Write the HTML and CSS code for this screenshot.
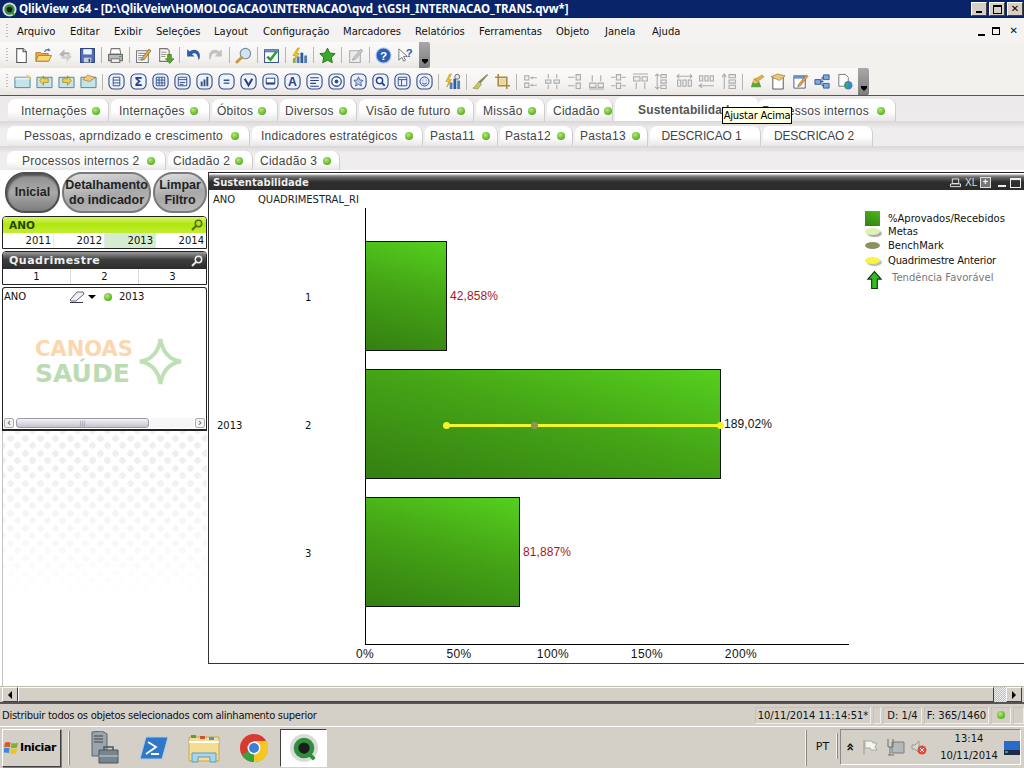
FILE: index.html
```html
<!DOCTYPE html>
<html lang="pt">
<head>
<meta charset="utf-8">
<title>QlikView x64</title>
<link rel="stylesheet" href="styles.css">
</head>
<body>
<svg class="defs" width="0" height="0" aria-hidden="true">
<defs>
<symbol id="i-new" viewBox="0 0 16 16"><path d="M3.5 1.5h6l3 3v10h-9z" fill="#fff" stroke="#555"/><path d="M9.5 1.5v3h3" fill="#ddd" stroke="#555"/></symbol>
<symbol id="i-open" viewBox="0 0 18 16"><path d="M1 5h5l1 1h7v8H1z" fill="#e8b04a" stroke="#a87820"/><path d="M3.500 8h14l-3 6H1z" fill="#f8d878" stroke="#b08428"/><path d="M10 4c1-2 3-2.500 5-2l-1-1.200M15 1.800l-1.400 1.600" fill="none" stroke="#5070a8" stroke-width="1.200"/></symbol>
<symbol id="i-ref" viewBox="0 0 16 16"><path d="M2 7l5-5v3h4l2 2H7v3z" fill="#b4b4b4"/><path d="M14 9l-5 5v-3H5L3 9h6V6z" fill="#cfcfcf"/></symbol>
<symbol id="i-save" viewBox="0 0 16 16"><path d="M1.500 1.500h13v13h-13z" fill="#4e6fb5" stroke="#2c4580"/><path d="M4 2h8v5H4z" fill="#f2f2f2"/><path d="M4.500 10h7v4.500h-7z" fill="#c8d0e0"/><path d="M9 11h1.500v3H9z" fill="#2c4580"/></symbol>
<symbol id="i-print" viewBox="0 0 16 16"><path d="M4 1.500h8l1 5H3z" fill="#fff" stroke="#777"/><path d="M1.500 7h13v6h-13z" fill="#b8bcc0" stroke="#666"/><path d="M4 11h8v3.500H4z" fill="#eee" stroke="#777"/><path d="M11.500 8.500h2v1h-2z" fill="#30a030"/></symbol>
<symbol id="i-note" viewBox="0 0 16 16"><path d="M1.500 3.500h11v11h-11z" fill="#fff" stroke="#777"/><path d="M3 6h7M3 8h6M3 10h5M3 12h6" stroke="#8898b0"/><path d="M7 10l6-8 2 1.500-6 8-3 1z" fill="#e8b040" stroke="#705020" stroke-width=".6"/></symbol>
<symbol id="i-docg" viewBox="0 0 16 16"><path d="M2.500 1.500h7l2 2v10h-9z" fill="#f4f4ea" stroke="#777"/><path d="M4 5h5M4 7h5M4 9h4" stroke="#9a9a8a"/><path d="M10 7h3.500v4H16l-4 4.500L8 11h2z" fill="#58a830" stroke="#2f7015" stroke-width=".6"/></symbol>
<symbol id="i-undo" viewBox="0 0 16 16"><path d="M2 2v7h7L6.500 6.500c2.500-1.500 5-.5 5.500 3l1 3c2.500-5 .5-10-4.500-10-1.500 0-3 .7-4 1.700z" fill="#2f5ca8"/></symbol>
<symbol id="i-redo" viewBox="0 0 16 16"><path d="M14 2v7H7l2.500-2.500c-2.500-1.500-5-.5-5.500 3l-1 3C.5 7.500 2.500 2.500 7.500 2.500c1.500 0 3 .7 4 1.700z" fill="#c2c2c2"/></symbol>
<symbol id="i-find" viewBox="0 0 18 18"><circle cx="11" cy="7" r="5.500" fill="#cfe4f4" stroke="#7a8c9c" stroke-width="1.200"/><path d="M7 11l-5 5" stroke="#c89a30" stroke-width="3" stroke-linecap="round"/></symbol>
<symbol id="i-check" viewBox="0 0 16 16"><path d="M1.500 2.500h13v12h-13z" fill="#fff" stroke="#33558c"/><path d="M2 3h12v2H2z" fill="#5a82c0"/><path d="M4 9l3 3 6-8" fill="none" stroke="#2fa030" stroke-width="2.400"/></symbol>
<symbol id="i-chart" viewBox="0 0 18 18"><path d="M6 10h3v7H6z" fill="#4f7fb5"/><path d="M10 6h3v11h-3z" fill="#2f5d9a"/><path d="M14 9h3v8h-3z" fill="#4f7fb5"/><path d="M2 17V12h3v5z" fill="#8ab040"/><path d="M7 1L2 9h3l-2 5 6-7H6l3-6z" fill="#f2c820" stroke="#a08010" stroke-width=".5"/></symbol>
<symbol id="i-star" viewBox="0 0 16 16"><path d="M8 1l2.200 4.600 5 .7-3.600 3.500.9 5L8 12.400l-4.500 2.400.9-5L.8 6.300l5-.7z" fill="#3aa828" stroke="#1f6a14" stroke-width=".8"/></symbol>
<symbol id="i-editg" viewBox="0 0 16 16"><path d="M2.500 3.500h10v11h-10z" fill="#ececec" stroke="#aaa"/><path d="M6 10l7-8 2 1.500-7 8-3 1z" fill="#c8c8c8" stroke="#999" stroke-width=".6"/></symbol>
<symbol id="i-help" viewBox="0 0 16 16"><circle cx="8" cy="8" r="7" fill="#2a5fb8" stroke="#a8c0e8"/><text x="8" y="12" font-size="11" font-weight="700" font-family="Liberation Sans" text-anchor="middle" fill="#fff">?</text></symbol>
<symbol id="i-what" viewBox="0 0 18 16"><path d="M2 1v12l3-3 2 4 2-1-2-4h4z" fill="#fff" stroke="#555" stroke-width=".8"/><text x="13" y="10" font-size="12" font-weight="700" font-family="Liberation Sans" text-anchor="middle" fill="#2a5fb8">?</text></symbol>
<symbol id="i-sheet" viewBox="0 0 18 16"><path d="M1 3.500h16v11H1z" fill="#c4e4ec" stroke="#558090"/><path d="M1.500 4h15v2h-15z" fill="#e4f4f8"/><path d="M14 0l.7 1.800L16.500 1l-.7 1.800L17.500 4l-2 .1-.5 1.800-.6-1.800-2 0 1.500-1.200-.8-1.900z" fill="#f6d020"/></symbol>
<symbol id="i-sl" viewBox="0 0 18 16"><path d="M1 3.500h16v11H1z" fill="#c4e4ec" stroke="#558090"/><path d="M4 7l4-5v3h5v4H8v3z" fill="#f2d040" stroke="#8a7010" stroke-width=".6"/></symbol>
<symbol id="i-sr" viewBox="0 0 18 16"><path d="M1 3.500h16v11H1z" fill="#c4e4ec" stroke="#558090"/><path d="M14 7l-4-5v3H5v4h5v3z" fill="#f2d040" stroke="#8a7010" stroke-width=".6"/></symbol>
<symbol id="i-sp" viewBox="0 0 18 16"><path d="M1 3.500h16v11H1z" fill="#c4e4ec" stroke="#558090"/><path d="M3 6l5-5 8 3-6 4z" fill="#f0c878" stroke="#8a6a20" stroke-width=".6"/></symbol>
<symbol id="i-bx" viewBox="0 0 18 18"><rect x="1" y="1" width="16" height="16" rx="5" fill="#eef2fa" stroke="#33508c" stroke-width="1.200"/></symbol>
<symbol id="i-f1" viewBox="0 0 18 18"><use href="#i-bx"/><path d="M5.500 4.500h7v9h-7zM5.500 7.500h7M5.500 10.500h7" fill="none" stroke="#33508c"/></symbol>
<symbol id="i-f2" viewBox="0 0 18 18"><use href="#i-bx"/><text x="9" y="14" font-size="13" font-weight="700" font-family="DejaVu Sans" text-anchor="middle" fill="#28408c">Σ</text></symbol>
<symbol id="i-f3" viewBox="0 0 18 18"><use href="#i-bx"/><path d="M4.500 4.500h9v9h-9zM4.500 7.500h9M4.500 10.500h9M7.500 4.500v9M10.500 4.500v9" fill="none" stroke="#33508c"/></symbol>
<symbol id="i-f4" viewBox="0 0 18 18"><use href="#i-bx"/><path d="M4.500 4.500h9v9h-9zM4.500 7h9M6 10h6M6 12h4" fill="none" stroke="#33508c"/></symbol>
<symbol id="i-f5" viewBox="0 0 18 18"><use href="#i-bx"/><path d="M5 9h2v5H5zM8 7h2v7H8zM11 4h2v10h-2z" fill="#33508c"/></symbol>
<symbol id="i-f6" viewBox="0 0 18 18"><use href="#i-bx"/><path d="M6 7h6v1.500H6zM6 10h6v1.500H6z" fill="#33508c"/></symbol>
<symbol id="i-f7" viewBox="0 0 18 18"><use href="#i-bx"/><path d="M5 6l4 7 4-7" fill="none" stroke="#28408c" stroke-width="2.200"/></symbol>
<symbol id="i-f8" viewBox="0 0 18 18"><use href="#i-bx"/><path d="M4.500 5.500h9v6h-9z" fill="#fff" stroke="#28408c"/><path d="M4.500 10h9v2h-9z" fill="#28408c"/></symbol>
<symbol id="i-f9" viewBox="0 0 18 18"><use href="#i-bx"/><text x="9" y="14" font-size="13" font-weight="700" font-family="Liberation Sans" text-anchor="middle" fill="#28408c">A</text></symbol>
<symbol id="i-f10" viewBox="0 0 18 18"><use href="#i-bx"/><path d="M4.500 5h9M4.500 8h9M4.500 11h6M4.500 14h9" stroke="#28408c" stroke-width="1.200"/></symbol>
<symbol id="i-f11" viewBox="0 0 18 18"><use href="#i-bx"/><circle cx="9" cy="9" r="5" fill="#fff" stroke="#33508c" stroke-width="1.400"/><circle cx="9" cy="9" r="2" fill="#33508c"/></symbol>
<symbol id="i-f12" viewBox="0 0 18 18"><use href="#i-bx"/><path d="M9 4l1.500 3.400 3.500.4-2.600 2.400.7 3.600L9 12l-3.100 1.800.7-3.600L4 7.800l3.500-.4z" fill="#b8c8ec" stroke="#33508c" stroke-width=".8"/></symbol>
<symbol id="i-f13" viewBox="0 0 18 18"><use href="#i-bx"/><circle cx="8" cy="8" r="3.300" fill="#fff" stroke="#28408c" stroke-width="1.500"/><path d="M10.500 10.500l3 3" stroke="#28408c" stroke-width="2"/></symbol>
<symbol id="i-f14" viewBox="0 0 18 18"><use href="#i-bx"/><path d="M4.500 4.500h9v9h-9zM4.500 7h9M8 7v6.500" fill="none" stroke="#33508c"/></symbol>
<symbol id="i-f15" viewBox="0 0 18 18"><use href="#i-bx"/><circle cx="9" cy="9" r="4.800" fill="#dfe8f8" stroke="#33508c"/><path d="M7 7.500h.6M10.500 7.500h.6M6.500 10.500c1.500 1.500 3.500 1.500 5 0" fill="none" stroke="#33508c"/></symbol>
<symbol id="i-kpi" viewBox="0 0 18 18"><path d="M6 10h3v7H6z" fill="#4f7fb5"/><path d="M10 6h3v11h-3z" fill="#2f5d9a"/><path d="M14 8h3v9h-3z" fill="#4f7fb5"/><path d="M6 1L2 9h3l-2 6 5-8H5l3-6z" fill="#f2c820" stroke="#a08010" stroke-width=".5"/><circle cx="14" cy="4" r="2.600" fill="#e8e8e8" stroke="#666"/></symbol>
<symbol id="i-brush" viewBox="0 0 18 18"><path d="M16 1l1 1-8 9-2-2z" fill="#8a8a6a"/><path d="M7 9l3 3-4 5-5-1c2-1 4-4 6-7z" fill="#c8c860" stroke="#7a7a30" stroke-width=".6"/></symbol>
<symbol id="i-crop" viewBox="0 0 16 16"><path d="M4 1v11h11M1 4h11v11" fill="none" stroke="#a88a40" stroke-width="1.500"/><path d="M5 5h6v6H5z" fill="#e8d8a0"/></symbol>
<symbol id="i-a1" viewBox="0 0 16 16"><path d="M2.500 2.500h4v4h-4zM2.500 9.500h4v4h-4z" fill="#eee" stroke="#aaa"/><path d="M8 4.500h6M8 11.500h6" stroke="#aaa"/><path d="M8 4.500l2-1.500v3zM8 11.500l2-1.500v3z" fill="#aaa"/></symbol>
<symbol id="i-a2" viewBox="0 0 16 16"><path d="M1.500 6.500h5v3h-5zM9.500 6.500h5v3h-5z" fill="#eee" stroke="#aaa"/><path d="M4 1v4M12 1v4M4 11v4M12 11v4" stroke="#aaa"/></symbol>
<symbol id="i-a3" viewBox="0 0 16 16"><path d="M9.500 1.500h4v5h-4zM9.500 9.500h4v5h-4z" fill="#eee" stroke="#aaa"/><path d="M2 4h6M2 12h6" stroke="#aaa"/></symbol>
<symbol id="i-a4" viewBox="0 0 16 16"><path d="M1.500 9.500h6v4h-6zM9.500 9.500h5v4h-5z" fill="#eee" stroke="#aaa"/><path d="M4 2v6M12 2v6M1 15h14" stroke="#aaa"/></symbol>
<symbol id="i-a5" viewBox="0 0 16 16"><path d="M6 1.500h4v5H6zM6 9.500h4v5H6z" fill="#eee" stroke="#aaa"/><path d="M1 4h4M11 4h4M1 12h4M11 12h4" stroke="#aaa"/></symbol>
<symbol id="i-a6" viewBox="0 0 16 16"><path d="M1.500 3.500h6v4h-6zM9.500 3.500h5v4h-5z" fill="#eee" stroke="#aaa"/><path d="M4 9v6M12 9v6M1 1h14" stroke="#aaa"/></symbol>
<symbol id="i-a7" viewBox="0 0 16 16"><path d="M6.500 1.500h5v3h-5zM6.500 6.500h5v3h-5zM6.500 11.500h5v3h-5z" fill="#eee" stroke="#aaa"/><path d="M3 1v14M1 3l2-2 2 2M1 13l2 2 2-2" fill="none" stroke="#aaa"/></symbol>
<symbol id="i-a8" viewBox="0 0 16 16"><path d="M1.500 6.500h3v6h-3zM6.500 6.500h3v6h-3zM11.500 6.500h3v6h-3z" fill="#eee" stroke="#aaa"/><path d="M1 3h14M3 1L1 3l2 2M13 1l2 2-2 2" fill="none" stroke="#aaa"/></symbol>
<symbol id="i-a9" viewBox="0 0 16 16"><path d="M1.500 2.500h3v5h-3zM6.500 2.500h3v5h-3zM11.500 2.500h3v5h-3z" fill="#eee" stroke="#aaa"/><path d="M1 12h14M4 10l-3 2 3 2" fill="none" stroke="#aaa"/></symbol>
<symbol id="i-a10" viewBox="0 0 16 16"><path d="M8.500 1.500h6v3h-6zM8.500 6.500h6v3h-6zM8.500 11.500h6v3h-6z" fill="#eee" stroke="#aaa"/><path d="M4 15V1M2 4l2-3 2 3" fill="none" stroke="#aaa"/></symbol>
<symbol id="i-s1" viewBox="0 0 18 18"><path d="M3 15l2-6h7l2 6z" fill="#58a838"/><circle cx="8" cy="8" r="3" fill="#f0c070"/><path d="M7 7l8-5 2 2-7 5z" fill="#e8b040" stroke="#8a6a20" stroke-width=".5"/></symbol>
<symbol id="i-s2" viewBox="0 0 18 18"><path d="M3 5h11v12H3z" fill="#fff" stroke="#555"/><path d="M1 4l7-3 8 2-6 5z" fill="#e8c878" stroke="#8a6a20" stroke-width=".6"/></symbol>
<symbol id="i-s3" viewBox="0 0 18 18"><path d="M2 3h12v13H2z" fill="#fff" stroke="#558"/><path d="M2 3h12v3H2z" fill="#6a92d0"/><path d="M7 12l8-10 2 1.500-8 10-3 1z" fill="#e8a040" stroke="#705020" stroke-width=".5"/></symbol>
<symbol id="i-s4" viewBox="0 0 18 18"><path d="M1 7h6v5H1zM10 2h6v5h-6zM10 11h6v5h-6z" fill="#7fa8dc" stroke="#345a90"/><path d="M7 9h3M10 4.500H8.500v9H10" fill="none" stroke="#345a90"/></symbol>
<symbol id="i-s5" viewBox="0 0 18 18"><path d="M3 1.500h7l3 3V14H3z" fill="#fff" stroke="#777"/><circle cx="13" cy="13" r="4.500" fill="#3a86c8"/><path d="M11 10c2 1 3 2 2 4-1 1-3 1-3 1z" fill="#58a838"/></symbol>
<symbol id="i-qv" viewBox="0 0 16 16"><circle cx="8" cy="8" r="7.500" fill="#d8dcd8"/><circle cx="8" cy="8" r="5.500" fill="#2f8f3a"/><circle cx="8" cy="8" r="3" fill="#1c1c1c"/><path d="M10.500 11l3 3" stroke="#2f8f3a" stroke-width="2"/></symbol>
<symbol id="i-mag" viewBox="0 0 12 12"><circle cx="7.500" cy="4.500" r="3.200" fill="none" stroke="currentColor" stroke-width="1.500"/><path d="M5 7l-4 4" stroke="currentColor" stroke-width="2"/></symbol>
</defs>
</svg>

<div class="app">
  <header class="titlebar">
    <svg class="title-logo"><use href="#i-qv"/></svg>
    <span class="title-text">QlikView x64 - [D:\QlikVeiw\HOMOLOGACAO\INTERNACAO\qvd_t\GSH_INTERNACAO_TRANS.qvw*]</span>
    <div class="wbtns">
      <span class="wbtn"><i class="g-min"></i></span>
      <span class="wbtn"><i class="g-res"></i></span>
      <span class="wbtn"><i class="g-close">✕</i></span>
    </div>
  </header>

  <nav class="menubar">
    <i class="grip"></i>
    <span class="mi m1">Arquivo</span><span class="mi m2">Editar</span><span class="mi m3">Exibir</span><span class="mi m4">Seleções</span><span class="mi m5">Layout</span><span class="mi m6">Configuração</span><span class="mi m7">Marcadores</span><span class="mi m8">Relatórios</span><span class="mi m9">Ferramentas</span><span class="mi m10">Objeto</span><span class="mi m11">Janela</span><span class="mi m12">Ajuda</span>
    <div class="mdi"><i class="g-min dark"></i><i class="g-res dark"></i><b class="mdi-x">✕</b></div>
  </nav>

  <div class="toolbar tb1">
    <div class="tb-band">
      <i class="grip"></i>
      <span class="tc"><svg class="ic"><use href="#i-new"/></svg></span>
      <span class="tc"><svg class="ic"><use href="#i-open"/></svg></span>
      <span class="tc"><svg class="ic"><use href="#i-ref"/></svg></span>
      <span class="tc"><svg class="ic"><use href="#i-save"/></svg></span>
      <i class="sep"></i>
      <span class="tc"><svg class="ic"><use href="#i-print"/></svg></span>
      <i class="sep"></i>
      <span class="tc"><svg class="ic"><use href="#i-note"/></svg></span>
      <span class="tc"><svg class="ic"><use href="#i-docg"/></svg></span>
      <i class="sep"></i>
      <span class="tc"><svg class="ic"><use href="#i-undo"/></svg></span>
      <span class="tc"><svg class="ic"><use href="#i-redo"/></svg></span>
      <i class="sep"></i>
      <span class="tc"><svg class="ic"><use href="#i-find"/></svg></span>
      <i class="sep"></i>
      <span class="tc"><svg class="ic"><use href="#i-check"/></svg></span>
      <i class="sep"></i>
      <span class="tc"><svg class="ic"><use href="#i-chart"/></svg></span>
      <i class="sep"></i>
      <span class="tc"><svg class="ic"><use href="#i-star"/></svg></span>
      <i class="sep"></i>
      <span class="tc"><svg class="ic"><use href="#i-editg"/></svg></span>
      <i class="sep"></i>
      <span class="tc"><svg class="ic"><use href="#i-help"/></svg></span>
      <span class="tc"><svg class="ic"><use href="#i-what"/></svg></span>
      <span class="overflow"><i></i></span>
    </div>
  </div>

  <div class="toolbar tb2">
    <div class="tb-band">
      <i class="grip"></i>
      <span class="tc"><svg class="ic"><use href="#i-sheet"/></svg></span>
      <span class="tc"><svg class="ic"><use href="#i-sl"/></svg></span>
      <span class="tc"><svg class="ic"><use href="#i-sr"/></svg></span>
      <span class="tc"><svg class="ic"><use href="#i-sp"/></svg></span>
      <i class="sep"></i>
      <span class="tc"><svg class="ic"><use href="#i-f1"/></svg></span>
      <span class="tc"><svg class="ic"><use href="#i-f2"/></svg></span>
      <span class="tc"><svg class="ic"><use href="#i-f3"/></svg></span>
      <span class="tc"><svg class="ic"><use href="#i-f4"/></svg></span>
      <span class="tc"><svg class="ic"><use href="#i-f5"/></svg></span>
      <span class="tc"><svg class="ic"><use href="#i-f6"/></svg></span>
      <span class="tc"><svg class="ic"><use href="#i-f7"/></svg></span>
      <span class="tc"><svg class="ic"><use href="#i-f8"/></svg></span>
      <span class="tc"><svg class="ic"><use href="#i-f9"/></svg></span>
      <span class="tc"><svg class="ic"><use href="#i-f10"/></svg></span>
      <span class="tc"><svg class="ic"><use href="#i-f11"/></svg></span>
      <span class="tc"><svg class="ic"><use href="#i-f12"/></svg></span>
      <span class="tc"><svg class="ic"><use href="#i-f13"/></svg></span>
      <span class="tc"><svg class="ic"><use href="#i-f14"/></svg></span>
      <span class="tc"><svg class="ic"><use href="#i-f15"/></svg></span>
      <i class="sep"></i>
      <span class="tc"><svg class="ic"><use href="#i-kpi"/></svg></span>
      <i class="sep"></i>
      <span class="tc"><svg class="ic"><use href="#i-brush"/></svg></span>
      <span class="tc"><svg class="ic"><use href="#i-crop"/></svg></span>
      <i class="sep"></i>
      <span class="tc"><svg class="ic"><use href="#i-a1"/></svg></span>
      <span class="tc"><svg class="ic"><use href="#i-a2"/></svg></span>
      <span class="tc"><svg class="ic"><use href="#i-a3"/></svg></span>
      <span class="tc"><svg class="ic"><use href="#i-a4"/></svg></span>
      <span class="tc"><svg class="ic"><use href="#i-a5"/></svg></span>
      <span class="tc"><svg class="ic"><use href="#i-a6"/></svg></span>
      <span class="tc"><svg class="ic"><use href="#i-a7"/></svg></span>
      <span class="tc"><svg class="ic"><use href="#i-a8"/></svg></span>
      <span class="tc"><svg class="ic"><use href="#i-a9"/></svg></span>
      <span class="tc"><svg class="ic"><use href="#i-a10"/></svg></span>
      <i class="sep"></i>
      <span class="tc"><svg class="ic"><use href="#i-s1"/></svg></span>
      <span class="tc"><svg class="ic"><use href="#i-s2"/></svg></span>
      <span class="tc"><svg class="ic"><use href="#i-s3"/></svg></span>
      <span class="tc"><svg class="ic"><use href="#i-s4"/></svg></span>
      <span class="tc"><svg class="ic"><use href="#i-s5"/></svg></span>
      <span class="overflow"><i></i></span>
    </div>
  </div>

  <section class="tabs">
    <div class="tabrow row1">
      <a class="tab">Internações<i class="dot"></i></a>
      <a class="tab">Internações<i class="dot"></i></a>
      <a class="tab">Óbitos<i class="dot"></i></a>
      <a class="tab">Diversos<i class="dot"></i></a>
      <a class="tab">Visão de futuro<i class="dot"></i></a>
      <a class="tab">Missão<i class="dot"></i></a>
      <a class="tab">Cidadão<i class="dot"></i></a>
      <a class="tab active">Sustentabilidade</a>
      <a class="tab">Processos internos<i class="dot"></i></a>
    </div>
    <div class="tabrow row2">
      <a class="tab">Pessoas, aprndizado e crescimento<i class="dot"></i></a>
      <a class="tab">Indicadores estratégicos<i class="dot"></i></a>
      <a class="tab">Pasta11<i class="dot"></i></a>
      <a class="tab">Pasta12<i class="dot"></i></a>
      <a class="tab">Pasta13<i class="dot"></i></a>
      <a class="tab center">DESCRICAO 1</a>
      <a class="tab center">DESCRICAO 2</a>
    </div>
    <div class="tabrow row3">
      <a class="tab">Processos internos 2<i class="dot"></i></a>
      <a class="tab">Cidadão 2<i class="dot"></i></a>
      <a class="tab">Cidadão 3<i class="dot"></i></a>
    </div>
    <div class="tooltip">Ajustar Acima</div>
  </section>

  <main class="sheet">
    <aside class="side">
      <div class="btns">
        <button class="pill p1">Inicial</button>
        <button class="pill p2">Detalhamento<br>do indicador</button>
        <button class="pill p3">Limpar<br>Filtro</button>
      </div>
      <div class="lb lb-ano">
        <div class="cap cap-lime"><span>ANO</span><svg class="mag"><use href="#i-mag"/></svg></div>
        <div class="vals y4"><span>2011</span><span>2012</span><span class="sel">2013</span><span>2014</span></div>
      </div>
      <div class="lb lb-q">
        <div class="cap cap-dark"><span>Quadrimestre</span><svg class="mag"><use href="#i-mag"/></svg></div>
        <div class="vals q3"><span>1</span><span>2</span><span>3</span></div>
      </div>
      <div class="cs">
        <div class="cs-row">
          <span class="cs-field">ANO</span>
          <svg class="eraser" viewBox="0 0 16 12"><path d="M1 9l7-8h6l1 2-8 7H2z" fill="#f0f0f4" stroke="#667"/><path d="M1 11.500h13" stroke="#334"/></svg>
          <i class="caret"></i>
          <i class="dot"></i>
          <span class="cs-val">2013</span>
        </div>
        <div class="logo">
          <div class="logo-text"><span class="l-a">CANOAS</span><span class="l-b">SAÚDE</span></div>
          <svg class="logo-star" viewBox="0 0 46 50"><path d="M23 2c2 13 8 21 21 23-13 2-19 10-21 23-2-13-8-21-21-23 13-2 19-10 21-23z" fill="none" stroke="#bfe0b4" stroke-width="4"/></svg>
        </div>
        <div class="hs">
          <span class="hs-b">‹</span>
          <span class="hs-t"><i>|||</i></span>
          <span class="hs-r"></span>
          <span class="hs-b">›</span>
        </div>
      </div>
      <div class="dots"></div>
    </aside>

    <section class="win">
      <div class="cap cap-win">
        <span>Sustentabilidade</span>
        <div class="win-ic">
          <svg class="w-p" viewBox="0 0 12 11"><path d="M2.500 1h7v5h-7zM.5 6.500h11v3H.5z" fill="none" stroke="#eee"/></svg>
          <span class="w-xl">XL</span>
          <span class="w-box">+</span>
          <i class="w-min"></i>
          <i class="w-max"></i>
        </div>
      </div>
      <div class="win-body">
        <div class="dimhead"><span>ANO</span><span>QUADRIMESTRAL_RI</span></div>
        <div class="plotwrap">
          <div class="dim1">2013</div>
          <div class="dim2"><span>1</span><span>2</span><span>3</span></div>
          <div class="plot">
            <div class="barrow"><div class="bar" style="width:82px"></div><span class="val red">42,858%</span></div>
            <div class="barrow"><div class="bar" style="width:356px"><div class="metas"><i class="pt yel p-a"></i><i class="pt olive p-b"></i><i class="pt yel p-c"></i></div></div><span class="val">189,02%</span></div>
            <div class="barrow"><div class="bar" style="width:155px"></div><span class="val red">81,887%</span></div>
          </div>
          <aside class="legend">
            <div class="lg lg-first"><i class="sw"></i><span>%Aprovados/Recebidos</span></div>
            <div class="lg lg-2"><i class="mk m-l"></i><span>Metas</span></div>
            <div class="lg"><i class="mk m-o"></i><span>BenchMark</span></div>
            <div class="lg"><i class="mk m-y"></i><span class="lg-tight">Quadrimestre Anterior</span></div>
            <div class="lg lg-t">
              <svg class="arrow" viewBox="0 0 16 20"><path d="M8 1l7 8h-4v10H5V9H1z" fill="#2fc020" stroke="#0a3a08" stroke-width="1.200"/></svg>
              <span>Tendência Favorável</span>
            </div>
          </aside>
        </div>
        <div class="xaxis"><span>0%</span><span>50%</span><span>100%</span><span>150%</span><span>200%</span></div>
      </div>
    </section>
  </main>

  <div class="hscroll">
    <span class="sb-btn"><i class="tri-l"></i></span>
    <span class="sb-track"></span>
    <span class="sb-hatch"></span>
    <span class="sb-btn"><i class="tri-r"></i></span>
  </div>

  <footer class="status">
    <span class="st-text">Distribuir todos os objetos selecionados com alinhamento superior</span>
    <span class="pn pn-date">10/11/2014 11:14:51*</span>
    <span class="pn pn-e"></span>
    <span class="pn pn-d">D: 1/4</span>
    <span class="pn pn-f">F: 365/1460</span>
    <span class="pn pn-dot"><i class="dot"></i></span>
    <span class="pn pn-end"></span>
  </footer>

  <footer class="taskbar">
    <button class="start">
      <svg class="win-logo" viewBox="0 0 16 16"><path d="M1 3c2-1 4-1 6 0l-1 5c-2-1-4-1-6 0z" fill="#e8502a"/><path d="M8 3c2 1 4 1 7 0l-1 5c-3 1-5 1-7 0z" fill="#7ab828"/><path d="M0 9c2-1 4-1 6 0l-1 5c-2-1-4-1-6 0z" fill="#2f8ce0"/><path d="M7 9c2 1 4 1 7 0l-1 5c-3 1-5 1-7 0z" fill="#f4c020"/></svg>
      <b>Iniciar</b>
    </button>
    <i class="tsep s1"></i>
    <svg class="task t1" viewBox="0 0 30 34"><path d="M3 1l10-1 5 3v22H3z" fill="#9aa4ac" stroke="#5a646c"/><path d="M5 5h9M5 8h9M5 11h9" stroke="#444"/><path d="M10 19h19v13H10z" fill="#78848e" stroke="#4a545c"/><path d="M15 19v-3h9v3" fill="none" stroke="#4a545c" stroke-width="1.500"/><path d="M10 25h19" stroke="#c8d0d8"/></svg>
    <svg class="task t2" viewBox="0 0 28 24"><path d="M6 1h22l-6 22H0z" fill="#2f78c8" stroke="#a8ccec"/><path d="M8 6l8 5-10 7M11 18h8" fill="none" stroke="#fff" stroke-width="1.800"/></svg>
    <svg class="task t3" viewBox="0 0 32 30"><path d="M1 4h30v24H1z" fill="#f4dc90" stroke="#c8a850"/><path d="M1 9h30" stroke="#fff" stroke-width="2"/><path d="M3 2h5v3H3z" fill="#50a050"/><path d="M12 3h5v3h-5z" fill="#d05030"/><path d="M21 4h5v3h-5z" fill="#40a0c0"/><path d="M4 29V20h24v9h-6v-5H10v5z" fill="#a8d4ec" stroke="#5a9cc0"/></svg>
    <svg class="task t4" viewBox="0 0 28 28"><circle cx="14" cy="14" r="14" fill="#d83a30"/><path d="M14 14L26.100 21A14 14 0 0 1 7 26.100z" fill="#3aa040"/><path d="M14 7h12.800A14 14 0 0 1 14 28z" fill="#f4c820"/><path d="M14 14L1.900 21A14 14 0 0 0 14 28z" fill="#3aa040"/><circle cx="14" cy="14" r="6.500" fill="#fff"/><circle cx="14" cy="14" r="5" fill="#3a80d8"/></svg>
    <span class="task-act"><svg class="qv-big"><use href="#i-qv"/></svg></span>
    <i class="tsep s2"></i>
    <span class="lang">PT</span>
    <i class="tsep s3"></i>
    <div class="tray">
      <span class="chev">«</span>
      <svg class="tr tr1" viewBox="0 0 16 16"><path d="M2 1v15" stroke="#9a9a9a"/><path d="M3 2h7l1 2h4l-2 4 2 3h-6l-1-2H3z" fill="#f4f4f0" stroke="#a8a8a0"/></svg>
      <svg class="tr tr2" viewBox="0 0 18 18"><path d="M5 4h12v11H5z" fill="#b4b8b8" stroke="#7a7e7e"/><path d="M1 1v8h5V1M3 9v8M1 17h6" fill="none" stroke="#6a6e6e"/></svg>
      <svg class="tr tr3" viewBox="0 0 16 16"><path d="M1 6h3l4-4v12l-4-4H1z" fill="#d8d8d4" stroke="#9a9a98"/><circle cx="11" cy="11" r="4.500" fill="#e04a3a"/><path d="M9 9l4 4M13 9l-4 4" stroke="#fff"/></svg>
      <div class="clock"><span>13:14</span><span>10/11/2014</span></div>
      <svg class="tr tr4" viewBox="0 0 16 14"><path d="M0 0h16v14H0z" fill="#2a6ac8"/><path d="M0 9h16v5H0z" fill="#1c2c48"/><path d="M1 11h3" stroke="#9adcf0"/></svg>
    </div>
  </footer>
</div>
</body>
</html>
```
FILE: styles.css
```css
* { box-sizing: border-box; }
html, body { margin: 0; padding: 0; }
body { width: 1024px; height: 768px; overflow: hidden; background: #d4d0c8; font-family: "DejaVu Sans", sans-serif; font-size: 10px; color: #111; }
.defs { position: absolute; }
i { font-style: normal; display: block; }
.app { width: 1024px; height: 768px; display: flex; flex-direction: column; }

.titlebar { height: 18px; background: #0a246a; display: flex; align-items: center; padding-left: 2px; color: #fff; }
.title-logo { width: 15px; height: 15px; margin-right: 2px; flex: none; }
.title-text { font: 700 11.500px/18px "Noto Sans", sans-serif; letter-spacing: -.08px; white-space: nowrap; }
.wbtns { margin-left: auto; margin-right: 1px; display: flex; gap: 2px; }
.wbtn { width: 16px; height: 14px; background: #d4d0c8; border: 1px solid; border-color: #fff #404040 #404040 #fff; display: flex; align-items: center; justify-content: center; position: relative; }
.g-min { width: 6px; height: 2px; background: #000; margin-top: 6px; }
.g-res { width: 9px; height: 9px; border: 1px solid #000; border-top-width: 2px; }
.g-close { font: 700 10px/10px "DejaVu Sans", sans-serif; color: #000; }

.menubar { height: 24px; background: #f4f3f1; display: flex; align-items: center; position: relative; font-size: 10px; padding-top: 2px; }
.grip { width: 2px; height: 15px; margin-left: 6px; flex: none; background-image: linear-gradient(#c2bfb8 50%, transparent 50%); background-size: 2px 3px; }
.menubar .grip { margin-right: 9px; }
.mi { white-space: nowrap; flex: none; }
.m1 { width: 53px; } .m2 { width: 44px; } .m3 { width: 42px; } .m4 { width: 58px; } .m5 { width: 49px; } .m6 { width: 80px; }
.m7 { width: 72px; } .m8 { width: 64px; } .m9 { width: 77px; } .m10 { width: 49px; } .m11 { width: 47px; } .m12 { width: 40px; }
.mdi { margin-left: auto; display: flex; align-items: center; gap: 7px; padding-right: 6px; }
.g-min.dark { width: 7px; height: 2px; margin-top: 7px; }
.g-res.dark { width: 8px; height: 8px; }
.mdi-x { font: 700 10px/10px "DejaVu Sans", sans-serif; margin-left: 3px; }

.toolbar { height: 26px; background: #f2f1ee; display: flex; align-items: stretch; }
.tb2 { height: 27px; }
.tb-band { display: flex; align-items: center; background: linear-gradient(#fbfbfa, #f3f1ef 70%, #e8e5e1); border-radius: 3px 0 0 3px; }
.tb-band > .grip { margin-right: 2px; }
.tb2 .tb-band > .grip { margin-right: 3px; }
.tc { width: 22px; height: 22px; display: flex; align-items: center; justify-content: center; flex: none; }
.ic { width: 17px; height: 17px; display: block; }
.sep { width: 1px; height: 16px; background: #b8b5ae; margin: 0 2.500px; flex: none; }
.overflow { width: 11px; align-self: stretch; background: linear-gradient(#a8a8a8, #7c7c7c); margin-left: 3px; position: relative; border-radius: 0 2px 2px 0; }
.overflow i { position: absolute; left: 3px; bottom: 4px; width: 0; height: 0; border: 3px solid transparent; border-top-color: #000; border-bottom: 0; box-shadow: 0 -2px 0 0 #000; }

.tabs { height: 75px; background: linear-gradient(#ebe9ea, #f0eeef 60%, #e4e2e3); border-top: 1px solid #555; position: relative; display: flex; flex-direction: column; }
.tabrow { display: grid; height: 25px; padding-top: 3px; align-content: start; }
.row1 { grid-template-columns: 103px 101px 68px 79px 117px 71px 68px 143px 138px; padding-left: 8px; }
.row2 { grid-template-columns: 245px 173px 75px 75px 75px 113px 112px; padding-left: 7px; padding-top: 5px; background: linear-gradient(#d9d7d8, #efedee 30%); }
.row3 { grid-template-columns: 161px 87px 87px; padding-left: 7px; padding-top: 5px; background: linear-gradient(#d9d7d8, #efedee 30%); height: 24px; }
.tab { height: 22px; background: linear-gradient(#fff 55%, #e8e6e7); border-radius: 7px 7px 0 0; margin-right: 2px; display: flex; align-items: center; padding-left: 13px; padding-right: 8px; padding-top: 1px; font: 12px/20px "Liberation Sans", sans-serif; letter-spacing: .27px; color: #444; white-space: nowrap; border-right: 1px solid #cfcdce; }
.row2 .tab { height: 20px; padding-top: 0; }
.row3 .tab { height: 19px; padding-top: 0; }
.row1 .tab:nth-child(2) { padding-left: 8px; padding-right: 11px; }
.row1 .tab:nth-child(3) { padding-left: 5px; padding-right: 11px; }
.row1 .tab:nth-child(4) { padding-left: 5px; padding-right: 9px; }
.row1 .tab:nth-child(5) { padding-left: 7px; padding-right: 8px; }
.row1 .tab:nth-child(6) { padding-left: 7px; padding-right: 8px; }
.row1 .tab:nth-child(7) { padding-left: 6px; padding-right: 0; }
.row1 .tab:last-child { padding-left: 4px; padding-right: 10px; margin-right: 0; }
.row2 .tab:nth-child(1) { padding-left: 17px; padding-right: 10px; }
.row2 .tab:nth-child(2) { padding-left: 9px; padding-right: 9px; }
.row2 .tab:nth-child(n+3) { padding-left: 5px; padding-right: 7px; }
.row2 .tab.center { padding-left: 12px; padding-right: 19px; justify-content: center; letter-spacing: -.1px; }
.row3 .tab:nth-child(1) { padding-left: 15px; padding-right: 10px; }
.row3 .tab:nth-child(2) { padding-left: 5px; padding-right: 9px; }
.row3 .tab:nth-child(3) { padding-left: 5px; padding-right: 8px; }
.dot { width: 8px; height: 8px; border-radius: 50%; background: radial-gradient(circle at 40% 35%, #b4ec70, #5cb028 70%, #4a8a28); margin-left: auto; flex: none; }
.row1 .tab.active { background: #fff; font-weight: 700; color: #555; letter-spacing: .15px; margin-top: -2px; height: 24px; border: 0; border-radius: 7px 7px 0 0; padding-left: 23px; z-index: 1; margin-right: 0; }
.tooltip { position: absolute; left: 722px; top: 11px; width: 70px; height: 17px; background: #ffffe1; border: 1px solid #000; font: 10px/15px "DejaVu Sans", sans-serif; text-align: center; color: #000; z-index: 5; white-space: nowrap; letter-spacing: -.2px; }

.sheet { height: 516px; display: flex; background: #fff; }
.side { width: 208px; flex: none; display: flex; flex-direction: column; padding-left: 2px; padding-top: 2px; }
.btns { display: grid; grid-template-columns: 55px 89px 54px; column-gap: 2px; padding-left: 3px; height: 44px; }
.pill { height: 41px; border-radius: 20px; border: 2px solid #7a7a7a; background: linear-gradient(170deg, #e2e2e2, #a8a8a8 55%, #bcbcbc); font: 700 12.500px/15px "Liberation Sans", sans-serif; color: #222; padding: 0; }
.p1 { border-color: #4e4e4e; background: linear-gradient(#8e8e8e, #aaa 50%, #7c7c7c); box-shadow: inset 1px 2px 2px #555; }
.lb { width: 205px; border: 1px solid #222; border-radius: 4px 4px 0 0; display: flex; flex-direction: column; background: #fff; }
.lb-ano { height: 33px; }
.lb-q { height: 34px; margin-top: 2px; }
.cap { display: flex; align-items: center; justify-content: space-between; font: 700 10.500px/14px "DejaVu Sans", sans-serif; }
.lb .cap { padding: 0 3px 0 6px; border-radius: 3px 3px 0 0; flex: none; }
.cap-lime { height: 16px; background: linear-gradient(#d8f468, #b0e610 45%, #c0ee30); color: #26460a; }
.cap-dark { height: 17px; background: linear-gradient(#9a9a9a, #3e3e3e 45%, #2c2c2c); color: #eee; font-size: 11px; letter-spacing: .5px; }
.mag { width: 12px; height: 12px; }
.cap-lime .mag { color: #557010; }
.cap-dark .mag { color: #eee; }
.vals { display: grid; flex: 1; font-size: 10px; line-height: 15px; }
.vals span { padding: 0 2px; }
.y4 { grid-template-columns: 51px 51px 51px 50px; text-align: right; }
.y4 span { border-right: 1px solid #e8e8e8; }
.y4 span:last-child { border-right: 0; }
.sel { background: #d6ecd0; }
.q3 { grid-template-columns: 68px 68px 67px; text-align: center; }
.q3 span { border-right: 1px solid #ddd; }
.q3 span:last-child { border-right: 0; }
.cs { width: 205px; height: 144px; margin-top: 2px; border: 1px solid #222; border-bottom-width: 2px; border-radius: 3px 3px 0 0; position: relative; display: flex; flex-direction: column; background: #fff; }
.cs-row { display: flex; align-items: center; height: 15px; margin-top: 1px; padding-left: 1px; }
.cs-field { width: 65px; }
.eraser { width: 16px; height: 12px; flex: none; }
.caret { width: 0; height: 0; border: 4px solid transparent; border-top-color: #000; border-bottom: 0; margin-left: 3px; }
.cs-row .dot { margin-left: 8px; }
.cs-val { margin-left: 7px; }
.logo { flex: 1; display: flex; align-items: center; padding-left: 32px; gap: 6px; padding-top: 3px; }
.logo-text { display: flex; flex-direction: column; font: 700 21px/24px "DejaVu Sans", sans-serif; width: 97px; flex: none; }
.l-a { color: #fcd6ae; }
.l-b { color: #bbdcb2; font-size: 25px; line-height: 25px; white-space: nowrap; }
.logo-star { width: 45px; height: 49px; flex: none; }
.hs { height: 13px; display: flex; align-items: center; padding: 0 1px; gap: 1px; }
.hs-b { width: 10px; height: 10px; border: 1px solid #aaa; border-radius: 2px; font: 10px/8px "DejaVu Sans", sans-serif; text-align: center; color: #444; background: #f2f2f2; }
.hs-t { width: 133px; height: 10px; margin-left: 1px; border: 1px solid #9a9aa8; border-radius: 3px; background: linear-gradient(#f4f4f6, #c4c4cc); font-size: 6px; line-height: 8px; text-align: center; color: #888; }
.hs-r { flex: 1; height: 10px; background: #f6f6f6; }
.dots { flex: 1; width: 205px; border-left: 1px solid #c4c4c4; background:
  linear-gradient(rgba(255,255,255,0) 10%, #fff 65%),
  radial-gradient(circle, #f0eef0 3px, transparent 3.5px) 0 0 / 15px 15px,
  radial-gradient(circle, #f0eef0 3px, transparent 3.5px) 7px 7px / 15px 15px; }

.win { flex: 1; display: flex; flex-direction: column; height: 492px; margin-top: 2px; border-left: 1px solid #333; border-bottom: 1px solid #333; background: #fff; position: relative; }
.cap-win { height: 18px; flex: none; border-top: 1px solid #222; padding: 2px 3px 0 4px; background: linear-gradient(#fff 1px, #aaa 2px, #6a6a6a 4px, #2e2e2e 9px, #2c2c2c); color: #eee; font-size: 10px; }
.win-ic { display: flex; align-items: center; color: #ddd; }
.w-p { width: 11px; height: 10px; }
.w-xl { margin-left: 4px; font: 10px/12px "Liberation Sans", sans-serif; width: 12px; }
.w-box { margin-left: 3px; width: 11px; height: 11px; border: 1px solid #ddd; background: #777; font: 700 9px/9px "Liberation Sans", sans-serif; text-align: center; color: #fff; }
.w-min { margin-left: 7px; width: 8px; height: 2px; background: #eee; margin-top: 7px; }
.w-max { margin-left: 4px; width: 11px; height: 10px; border: 1px solid #eee; border-top-width: 2px; }
.win-body { flex: 1; display: flex; flex-direction: column; }
.dimhead { height: 18px; display: flex; padding-left: 4px; line-height: 20px; color: #222; flex: none; }
.dimhead span:first-child { width: 45px; }
.plotwrap { height: 437px; display: flex; position: relative; }
.dim1 { width: 96px; flex: none; padding-left: 8px; align-self: center; padding-bottom: 2px; }
.dim2 { width: 60px; flex: none; display: flex; flex-direction: column; padding-top: 35px; gap: 18px; }
.dim2 span { height: 110px; line-height: 110px; }
.plot { width: 484px; flex: none; border-left: 1px solid #000; border-bottom: 1px solid #000; padding-top: 33px; display: flex; flex-direction: column; gap: 18px; }
.barrow { height: 110px; display: flex; align-items: center; }
.bar { height: 110px; border: 1px solid #111; margin-left: -1px; background: linear-gradient(15deg, #347f12, #45a516 55%, #55d01e); position: relative; flex: none; }
.val { font: 12px/14px "Liberation Sans", sans-serif; letter-spacing: .1px; margin-left: 3px; color: #111; }
.red { color: #a81818; }
.metas { position: absolute; left: 80px; right: -1px; top: 54px; height: 3px; background: #f4f428; }
.pt { position: absolute; top: -2px; width: 7px; height: 7px; border-radius: 50%; }
.yel { background: #f4f428; }
.olive { background: #90965a; }
.p-a { left: -3px; }
.p-b { left: 85px; }
.p-c { right: -3px; }
.legend { flex: 1; padding: 0 0 0 16px; }
.lg { display: flex; align-items: center; height: 14.500px; white-space: nowrap; }
.lg-first { height: 16px; margin-top: 2px; }
.lg-2 { margin-top: -2px; }
.lg-tight { letter-spacing: -.2px; }
.sw { width: 15px; height: 15px; background: linear-gradient(20deg, #347f12, #4cb81a); margin-right: 8px; }
.mk { width: 15px; height: 7px; border-radius: 50%; margin-right: 8px; position: relative; }
.m-l { background: #dff2b4; box-shadow: 2px 2px 1px #aaa; }
.m-o { background: #8d9160; }
.m-y { background: #f6f640; box-shadow: 2px 2px 1px #bbb; }
.lg-t { height: 22px; margin-top: 1px; color: #777; }
.lg-t span { margin-top: -5px; }
.arrow { width: 15px; height: 20px; margin: 0 10px 0 2px; flex: none; }
.xaxis { height: 18px; padding-left: 156px; display: flex; font: 12px/19px "Liberation Sans", sans-serif; letter-spacing: .4px; flex: none; }
.xaxis span { width: 94px; flex: none; text-align: center; transform: translateX(-47px); }

.hscroll { height: 18px; flex: none; display: flex; align-items: center; background: #d4d0c8; padding: 0 2px; border-top: 1px solid #bdbab2; border-bottom: 2px solid #555; box-shadow: inset 0 1px 0 #eee; }
.sb-btn { width: 16px; height: 15px; background: #d4d0c8; border: 1px solid; border-color: #fff #404040 #404040 #fff; display: flex; align-items: center; justify-content: center; flex: none; }
.tri-l { width: 0; height: 0; border: 4px solid transparent; border-right-color: #000; border-left: 0; }
.tri-r { width: 0; height: 0; border: 4px solid transparent; border-left-color: #000; border-right: 0; }
.sb-track { flex: 1; height: 15px; border: 1px solid; border-color: #fff #404040 #404040 #fff; background: #d4d0c8; }
.sb-hatch { width: 12px; height: 15px; background: repeating-conic-gradient(#eee 0 25%, #c4c0b8 0 50%) 0 0 / 2px 2px; }

.status { height: 23px; flex: none; display: flex; align-items: center; background: #d4d0c8; border-bottom: 1px solid #fff; padding-left: 2px; }
.st-text { flex: 1; white-space: nowrap; letter-spacing: -.3px; }
.pn { height: 17px; border: 1px solid #c6c2ba; border-right-color: #eee; border-bottom-color: #eee; line-height: 15px; text-align: center; flex: none; margin-left: 2px; white-space: nowrap; }
.pn-date { width: 116px; }
.pn-e { width: 8px; }
.pn-d { width: 39px; }
.pn-f { width: 65px; }
.pn-dot { width: 20px; display: flex; align-items: center; justify-content: center; }
.pn-dot .dot { margin: 0; }
.pn-end { width: 11px; }

.taskbar { flex: 1; display: flex; align-items: center; background: #d4d0c8; padding-left: 2px; position: relative; }
.start { width: 59px; height: 38px; border: 1px solid; border-color: #fff #404040 #404040 #fff; background: #d4d0c8; display: flex; align-items: center; padding: 0 0 0 1px; gap: 1px; flex: none; box-shadow: 1px 1px 0 #808080; }
.start b { font: 700 11px/14px "DejaVu Sans", sans-serif; letter-spacing: -.4px; }
.win-logo { width: 15px; height: 15px; flex: none; }
.tsep { width: 2px; height: 34px; background: #f2f0ec; border-right: 1px solid #8a8a84; flex: none; }
.s1 { margin-left: 7px; }
.task { flex: none; }
.t1 { width: 30px; height: 34px; margin-left: 19px; }
.t2 { width: 28px; height: 24px; margin-left: 21px; }
.t3 { width: 32px; height: 30px; margin-left: 20px; }
.t4 { width: 28px; height: 28px; margin-left: 20px; }
.task-act { width: 47px; height: 38px; margin-left: 12px; background: #fff; border: 1px solid; border-color: #404040 #fff #fff #404040; display: flex; align-items: center; justify-content: center; flex: none; }
.qv-big { width: 30px; height: 30px; }
.s2 { margin-left: auto; height: 36px; }
.lang { width: 29px; padding-left: 2px; text-align: center; font-size: 11px; margin-top: -3px; }
.s3 { height: 26px; width: 2px; margin-top: -4px; margin-right: 2px; }
.tray { width: 181px; height: 36px; margin-right: 3px; border: 1px solid; border-color: #8a8a84 #fff #fff #8a8a84; display: flex; align-items: center; padding-left: 5px; flex: none; margin-top: -2px; }
.chev { transform: rotate(90deg); font: 700 14px/14px "DejaVu Sans", sans-serif; width: 11px; text-align: center; }
.tr { flex: none; }
.tr1 { width: 16px; height: 16px; margin-left: 6px; }
.tr2 { width: 18px; height: 18px; margin-left: 9px; }
.tr3 { width: 16px; height: 16px; margin-left: 6px; }
.clock { width: 66px; margin-left: 12px; display: flex; flex-direction: column; gap: 4px; text-align: center; line-height: 13px; }
.tr4 { width: 16px; height: 14px; margin-left: 5px; margin-top: 2px; }
```
